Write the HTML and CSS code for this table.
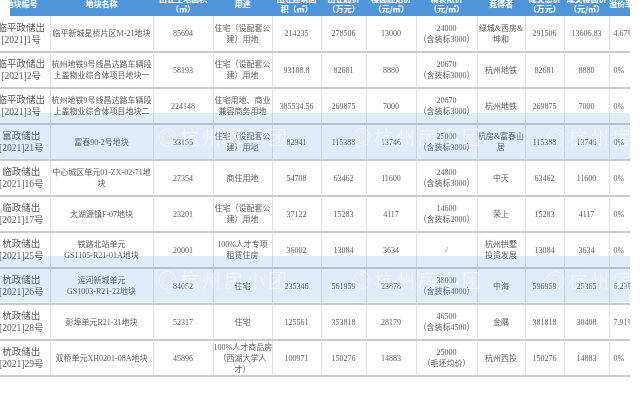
FILE: index.html
```html
<!DOCTYPE html>
<html lang="zh">
<head>
<meta charset="utf-8">
<title>杭州土拍成交表</title>
<link rel="stylesheet" href="styles.css">
</head>
<body>
<div class="sheet">
  <table class="land">
    <colgroup>
      <col class="w1"><col class="w2"><col class="w3"><col class="w4"><col class="w5"><col class="w6">
      <col class="w7"><col class="w8"><col class="w9"><col class="w10"><col class="w11"><col class="w12">
    </colgroup>
    <thead>
      <tr>
        <th class="first">地块编号</th>
        <th>地块名称</th>
        <th>出让土地面积<br>（㎡）</th>
        <th>用途</th>
        <th>出让建筑面<br>积（㎡）</th>
        <th>出让起价<br>（万元）</th>
        <th>楼面起始价<br>（元/㎡）</th>
        <th>精装限价<br>（元/㎡）</th>
        <th>竞得者</th>
        <th>成交总价<br>（万元）</th>
        <th>成交楼面价<br>（元/㎡）</th>
        <th>溢价率</th>
      </tr>
    </thead>
    <tbody>
      <tr>
        <td class="code">临平政储出<br>[2021]1号</td>
        <td>临平新城星桥片区M-21地块</td>
        <td>85694</td>
        <td>住宅（设配套公<br>建）用地</td>
        <td>214235</td>
        <td>278506</td>
        <td>13000</td>
        <td>24000<br>（含装标3000）</td>
        <td>绿城&amp;西房&amp;<br>坤和</td>
        <td>291506</td>
        <td>13606.83</td>
        <td class="last">4.67%</td>
      </tr>
      <tr>
        <td class="code">临平政储出<br>[2021]2号</td>
        <td>杭州地铁9号线昌达路车辆段<br>上盖物业综合体项目地块一</td>
        <td>58193</td>
        <td>住宅（设配套公<br>建）用地</td>
        <td>93108.8</td>
        <td>82681</td>
        <td>8880</td>
        <td>20670<br>（含装标3000）</td>
        <td>杭州地铁</td>
        <td>82681</td>
        <td>8880</td>
        <td class="last">0%</td>
      </tr>
      <tr>
        <td class="code">临平政储出<br>[2021]3号</td>
        <td>杭州地铁9号线昌达路车辆段<br>上盖物业综合体项目地块二</td>
        <td>224148</td>
        <td>住宅用地、商业<br>兼容商务用地</td>
        <td>385534.56</td>
        <td>269875</td>
        <td>7000</td>
        <td>20670<br>（含装标3000）</td>
        <td>杭州地铁</td>
        <td>269875</td>
        <td>7000</td>
        <td class="last">0%</td>
      </tr>
      <tr>
        <td class="code">富政储出<br>[2021]21号</td>
        <td>富春90-2号地块</td>
        <td>33155</td>
        <td>住宅（设配套公<br>建）用地</td>
        <td>82941</td>
        <td>115388</td>
        <td>13746</td>
        <td>25000<br>（含装标3000）</td>
        <td>杭房&amp;富春山<br>居</td>
        <td>115388</td>
        <td>13746</td>
        <td class="last">0%</td>
      </tr>
      <tr>
        <td class="code">临政储出<br>[2021]16号</td>
        <td>中心城区单元01-ZX-02-71地<br>块</td>
        <td>27354</td>
        <td>商住用地</td>
        <td>54708</td>
        <td>63462</td>
        <td>11600</td>
        <td>24800<br>（含装标3000）</td>
        <td>中天</td>
        <td>63462</td>
        <td>11600</td>
        <td class="last">0%</td>
      </tr>
      <tr>
        <td class="code">临政储出<br>[2021]17号</td>
        <td>太湖源镇F-07地块</td>
        <td>23201</td>
        <td>住宅（设配套公<br>建）用地</td>
        <td>37122</td>
        <td>15283</td>
        <td>4117</td>
        <td>14600<br>（含装标2000）</td>
        <td>荣上</td>
        <td>15283</td>
        <td>4117</td>
        <td class="last">0%</td>
      </tr>
      <tr>
        <td class="code">杭政储出<br>[2021]25号</td>
        <td>铁路北站单元<br>GS1105-R21-01A地块</td>
        <td>20001</td>
        <td>100%人才专项<br>租赁住房</td>
        <td>36002</td>
        <td>13084</td>
        <td>3634</td>
        <td>/</td>
        <td>杭州拱墅<br>投资发展</td>
        <td>13084</td>
        <td>3634</td>
        <td class="last">0%</td>
      </tr>
      <tr>
        <td class="code">杭政储出<br>[2021]26号</td>
        <td>运河新城单元<br>GS1003-R21-22地块</td>
        <td>84052</td>
        <td>住宅</td>
        <td>235346</td>
        <td>561959</td>
        <td>23878</td>
        <td>38000<br>（含装标4000）</td>
        <td>中海</td>
        <td>596959</td>
        <td>25365</td>
        <td class="last">6.23%</td>
      </tr>
      <tr>
        <td class="code">杭政储出<br>[2021]28号</td>
        <td>彭埠单元R21-31地块</td>
        <td>52317</td>
        <td>住宅</td>
        <td>125561</td>
        <td>353818</td>
        <td>28179</td>
        <td>46500<br>（含装标4500）</td>
        <td>金隅</td>
        <td>381818</td>
        <td>30408</td>
        <td class="last">7.91%</td>
      </tr>
      <tr>
        <td class="code">杭政储出<br>[2021]29号</td>
        <td>双桥单元XH0201-08A地块</td>
        <td>45896</td>
        <td>100%人才商品房<br>（西湖大学人<br>才）</td>
        <td>100971</td>
        <td>150276</td>
        <td>14883</td>
        <td>25000<br>（毛坯均价）</td>
        <td>杭州西投</td>
        <td>150276</td>
        <td>14883</td>
        <td class="last">0%</td>
      </tr>
    </tbody>
  </table>
  <div class="band band-a">
    <span class="mark">◎杭州房小团</span><span class="mark">◎杭州房小团</span><span class="mark">◎杭州房小团</span><span class="mark">◎杭州房小团</span>
  </div>
  <div class="band band-b">
    <span class="mark">◎杭州房小团</span><span class="mark">◎杭州房小团</span><span class="mark">◎杭州房小团</span><span class="mark">◎杭州房小团</span>
  </div>
</div>
</body>
</html>
```

FILE: styles.css
```css
* { box-sizing: border-box; }

html, body {
  margin: 0;
  padding: 0;
  background: #ffffff;
}

body {
  width: 640px;
  height: 400px;
  overflow: hidden;
  font-family: "Liberation Serif", "Noto Sans CJK SC", serif;
}

.sheet {
  position: relative;
  width: 637px;
  margin: -8px 0 0 -7px;
  overflow: hidden;
  filter: blur(0.3px);
}

.land {
  border-collapse: collapse;
  table-layout: fixed;
  width: 637px;
}

.w1 { width: 57px; }
.w2 { width: 103px; }
.w3 { width: 60px; }
.w4 { width: 59px; }
.w5 { width: 49px; }
.w6 { width: 45px; }
.w7 { width: 50px; }
.w8 { width: 61px; }
.w9 { width: 48px; }
.w10 { width: 39px; }
.w11 { width: 45px; }
.w12 { width: 21px; }

.land th {
  height: 24px;
  padding: 0;
  background: #4f95da;
  color: #ffffff;
  font-family: "Noto Sans CJK SC", sans-serif;
  font-weight: bold;
  font-size: 8px;
  line-height: 10px;
  text-align: center;
  vertical-align: middle;
  white-space: nowrap;
  overflow: hidden;
}

.land th.first {
  background: linear-gradient(to right, #ffffff 17px, #4f95da 17px);
}

.land td {
  height: 36px;
  padding: 0;
  border-bottom: 2px solid #cbcbcb;
  border-right: 1px solid #e0e0e0;
  color: #5a5a5a;
  font-size: 8px;
  line-height: 11px;
  text-align: center;
  vertical-align: middle;
  white-space: nowrap;
  overflow: hidden;
}

.land td.code {
  font-size: 9.5px;
  line-height: 12px;
}

.land td.last {
  text-align: left;
  padding-left: 4px;
  border-right: none;
}

.band {
  position: absolute;
  left: 0;
  width: 637px;
  height: 46px;
  background: rgba(70, 145, 220, 0.17);
  display: flex;
  align-items: center;
  gap: 62px;
  padding-left: 165px;
  overflow: hidden;
  pointer-events: none;
}

.band-a { top: 121px; }
.band-b { top: 264px; }

.mark {
  flex: none;
  color: rgba(255, 255, 255, 0.4);
  font-family: "Noto Sans CJK SC", sans-serif;
  font-size: 19px;
  letter-spacing: 3px;
}
```
